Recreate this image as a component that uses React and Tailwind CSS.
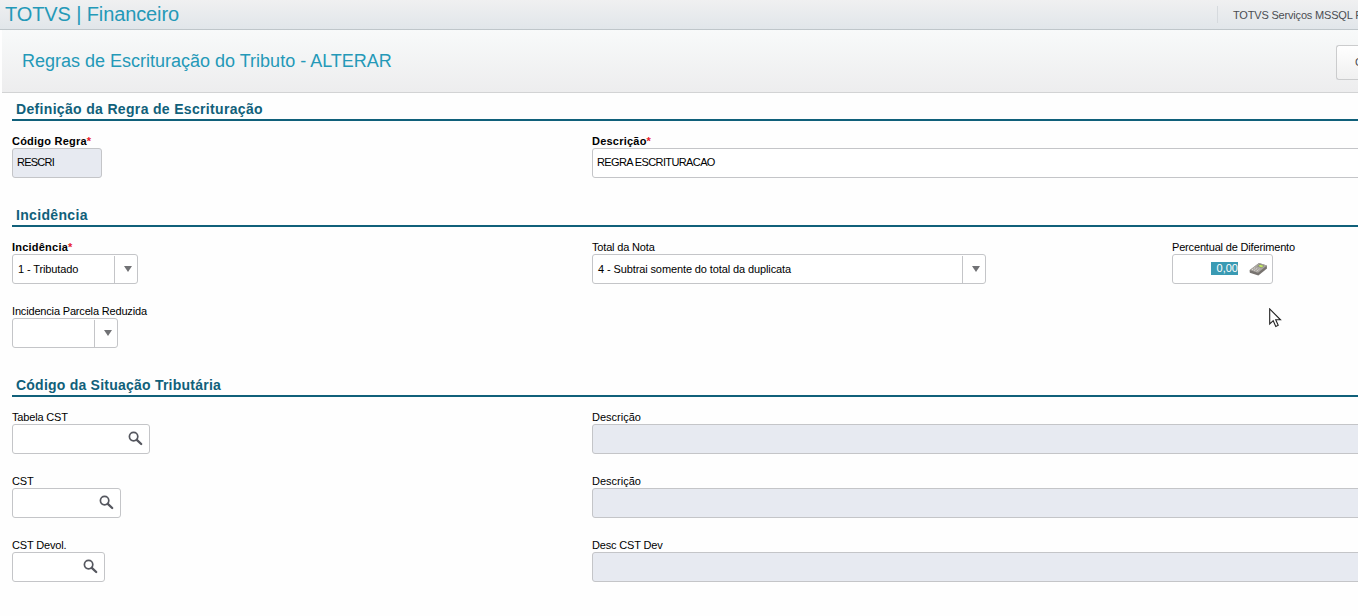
import React, { useState } from "react";
import { clsx } from "clsx";

const SearchIcon = () => (
  <svg width="16" height="16" viewBox="0 0 16 16" fill="none" stroke="#55575f" className="mb-px">
    <circle cx="5.6" cy="5.6" r="4.2" strokeWidth="1.7" />
    <path d="M8.8 8.8 L13.2 13" strokeWidth="2.3" strokeLinecap="round" />
  </svg>
);

const CalculatorIcon = () => (
  <svg width="19" height="15" viewBox="0 0 19 15">
    <path d="M0.6 8.2 L10 1 L17.8 3.4 L18 6.4 L9.4 13.4 L0.8 10.8 Z" fill="#77736f" />
    <path d="M0.6 8 L10 1 L17.8 3.4 L9 10.8 Z" fill="#aaa6a1" />
    <path d="M8 4.2 L10.8 2.1 L15.4 3.6 L12.8 6 Z" fill="#83817a" />
    <path d="M9.2 4.1 L11 2.7 L14.6 3.8 L12.7 5.4 Z" fill="#c3ea62" />
    <path d="M3 7.8 L5.8 5.8 M5.2 8.5 L8.2 6.4 M7.6 9.2 L10.4 7" stroke="#dedbd6" strokeWidth="1" strokeDasharray="1.5 0.9" />
  </svg>
);

const CursorIcon = () => (
  <svg width="13" height="20" viewBox="0 0 13 20" className="absolute left-[1269px] top-[308px]">
    <path d="M0.7 0.9 V16 L4.2 12.7 L6.8 18.4 L9.2 17.3 L6.7 11.8 H11.5 Z" fill="#fff" stroke="#222" strokeWidth="1.1" />
  </svg>
);

const Label = ({ text, required, tight }) => (
  <label
    className={clsx(
      "block h-[13px] whitespace-nowrap text-[11px] leading-[13px]",
      required && "font-bold tracking-[0.22px]",
      tight && "tracking-[-0.17px]"
    )}
  >
    {text}
    {required && <span className="text-[#e8202a]">*</span>}
  </label>
);

// Campo de texto simples, com fundo cinza quando bloqueado
const TextField = ({ label, required, tight, value, disabled, className, boxClass }) => (
  <div className={className}>
    <Label text={label} required={required} tight={tight} />
    <div
      className={clsx(
        "flex h-[30px] items-center rounded-[3px] border border-[#c4c5c8] px-1 pb-[2px] text-[11px]",
        disabled ? "bg-[#e7eaf1] tracking-[-0.75px]" : "bg-white tracking-[-0.62px]",
        boxClass
      )}
    >
      {value}
    </div>
  </div>
);

// Lista de opções
const SelectField = ({ label, required, value, boxClass }) => (
  <div>
    <Label text={label} required={required} tight={!required} />
    <div className={clsx("flex h-[30px] rounded-[3px] border border-[#c4c5c8] bg-white text-[11px] tracking-[-0.11px]", boxClass)}>
      <div className="flex flex-1 items-center pl-[5px]">{value}</div>
      <div className="mt-px flex w-[23px] items-center justify-center border-l border-[#c4c5c8] pb-[2px] pl-[3px]">
        <svg width="8" height="6" viewBox="0 0 8 6">
          <path d="M0 0 H8 L4 6 Z" fill="#717275" />
        </svg>
      </div>
    </div>
  </div>
);

// Campo com consulta (lupa)
const LookupField = ({ label, boxClass }) => (
  <div>
    <Label text={label} tight />
    <div className={clsx("flex h-[30px] items-center justify-end rounded-[3px] border border-[#c4c5c8] bg-white pr-[5px]", boxClass)}>
      <SearchIcon />
    </div>
  </div>
);

const Section = ({ title, titleClass = "tracking-[0.33px]", children }) => (
  <section>
    <h2 className={clsx("h-[28px] border-b-2 border-[#10607a] pl-1 text-[14px] font-bold leading-[32px] text-[#10607a]", titleClass)}>
      {title}
    </h2>
    <div className="grid grid-cols-[580px_580px_580px] gap-y-[21px] pt-[14px]">{children}</div>
  </section>
);

export default function App() {
  const [percentual] = useState("0,00");

  return (
    <div className="relative h-[616px] w-[1358px] overflow-hidden bg-[#fefefe] font-['Liberation_Sans',Arial,sans-serif] text-black">
      {/* Barra superior */}
      <header className="flex h-[30px] items-center justify-between border-b border-[#bfc6ca] bg-linear-to-b from-[#f0f0f1] to-[#e1e6ea]">
        <div className="whitespace-nowrap pb-px pl-[5px] text-[20px] leading-[28px] tracking-[-0.11px] text-[#2499b8]">TOTVS | Financeiro</div>
        <div className="flex h-[17px] w-[141px] items-center overflow-hidden whitespace-nowrap border-l border-[#d6dade] pl-[15px] pt-px text-[11px] tracking-[-0.18px] text-[#4b4d52]">
          TOTVS Serviços MSSQL P12
        </div>
      </header>

      {/* Título da rotina */}
      <div className="ml-[2px] flex h-[63px] items-center justify-between border-b border-[#d2d3d4] bg-linear-to-b from-[#f8fafa] to-[#ededee] pl-5">
        <h1 className="whitespace-nowrap pt-px text-[18px] text-[#2499b8]">Regras de Escrituração do Tributo - ALTERAR</h1>
        <div className="mt-[2px] h-[35px] w-[22px] shrink-0 overflow-hidden rounded-l-[3px] border border-r-0 border-[#cbcccd] bg-linear-to-b from-white to-[#f0f0f0] pl-[18px] text-[11px] leading-[33px] text-[#4b4d52]">
          Cancelar
        </div>
      </div>

      <main className="flex w-[1752px] flex-col gap-[21px] pl-3">
        <Section title="Definição da Regra de Escrituração">
          <TextField label="Código Regra" required value="RESCRI" disabled boxClass="w-[90px]" />
          <TextField label="Descrição" required value="REGRA ESCRITURACAO" className="col-span-2" />
        </Section>

        <Section title="Incidência">
          <SelectField label="Incidência" required value="1 - Tributado" boxClass="w-[126px]" />
          <SelectField label="Total da Nota" value="4 - Subtrai somente do total da duplicata" boxClass="w-[394px]" />
          <div>
            <Label text="Percentual de Diferimento" tight />
            <div className="flex h-[30px] w-[101px] items-center justify-end gap-[11px] rounded-[3px] border border-[#c4c5c8] bg-white pr-[4px]">
              <span className="mb-[2px] h-[13px] w-[27px] bg-[#3a9ab3] text-right text-[11px] leading-[13px] text-white">{percentual}</span>
              <CalculatorIcon />
            </div>
          </div>
          <SelectField label="Incidencia Parcela Reduzida" boxClass="w-[106px]" />
        </Section>

        <Section title="Código da Situação Tributária" titleClass="tracking-[0.23px]">
          <LookupField label="Tabela CST" boxClass="w-[138px]" />
          <TextField label="Descrição" disabled className="col-span-2" />
          <LookupField label="CST" boxClass="w-[109px]" />
          <TextField label="Descrição" disabled className="col-span-2" />
          <LookupField label="CST Devol." boxClass="w-[93px]" />
          <TextField label="Desc CST Dev" tight disabled className="col-span-2" />
        </Section>
      </main>

      <CursorIcon />
    </div>
  );
}
